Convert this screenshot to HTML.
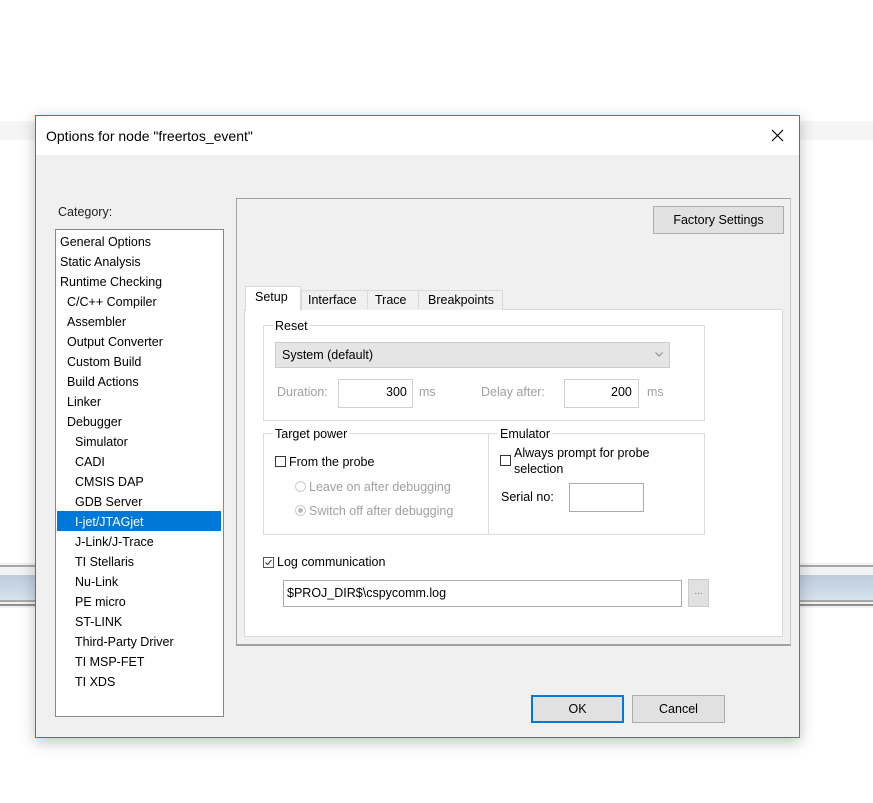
<!DOCTYPE html>
<html><head><style>
*{margin:0;padding:0;box-sizing:border-box}
body{width:873px;height:803px;background:#fff;position:relative;overflow:hidden;font-family:"Liberation Sans",sans-serif;font-size:12.5px;color:#000}
.a{position:absolute}
.t{position:absolute;white-space:nowrap;line-height:16px}
.g{color:#a0a0a0}
.btn{position:absolute;background:#e1e1e1;border:1px solid #adadad;text-align:center}
.inp{position:absolute;background:#fff;border:1px solid #d0d0d0}
.cb{position:absolute;width:11px;height:11px;border:1px solid #333;background:#fff}
.grp{position:absolute;border:1px solid #dcdcdc}
.gl{position:absolute;background:#fff;padding:0 2px;line-height:16px}
</style></head><body>
<div class="a" style="left:0;top:121px;width:873px;height:19px;background:#f5f5f5"></div>
<div class="a" style="left:0;top:563px;width:873px;height:45px;background:#f2f2f2"></div>
<div class="a" style="left:0;top:565px;width:873px;height:2px;background:#a8a8a8"></div>
<div class="a" style="left:0;top:575px;width:873px;height:25px;background:linear-gradient(#bccbdb,#d6e3ef)"></div>
<div class="a" style="left:0;top:600px;width:873px;height:2px;background:#a8a8a8"></div>
<div class="a" style="left:0;top:604px;width:873px;height:2px;background:#909090"></div>

<div class="a" style="left:35px;top:115px;width:765px;height:623px;background:#f0f0f0;border:1px solid #2b7bd0;box-shadow:0 4px 14px rgba(0,0,0,.25)">
 <div class="a" style="left:0;top:0;width:763px;height:39px;background:#fff"></div>
</div>
<div class="t" style="left:46px;top:127px;font-size:14px;line-height:18px">Options for node "freertos_event"</div>
<svg class="a" style="left:771px;top:129px" width="13" height="13"><path d="M1 1L12 12M12 1L1 12" stroke="#000" stroke-width="1.2"/></svg>

<div class="t" style="left:58px;top:204px;color:#222">Category:</div>
<div class="a" style="left:55px;top:229px;width:169px;height:488px;background:#fff;border:1px solid #828790"></div>
<div class="a" style="left:57px;top:511px;width:164px;height:20px;background:#0078d7"></div>
<div class="t" style="left:60px;top:234px">General Options</div>
<div class="t" style="left:60px;top:254px">Static Analysis</div>
<div class="t" style="left:60px;top:274px">Runtime Checking</div>
<div class="t" style="left:67px;top:294px">C/C++ Compiler</div>
<div class="t" style="left:67px;top:314px">Assembler</div>
<div class="t" style="left:67px;top:334px">Output Converter</div>
<div class="t" style="left:67px;top:354px">Custom Build</div>
<div class="t" style="left:67px;top:374px">Build Actions</div>
<div class="t" style="left:67px;top:394px">Linker</div>
<div class="t" style="left:67px;top:414px">Debugger</div>
<div class="t" style="left:75px;top:434px">Simulator</div>
<div class="t" style="left:75px;top:454px">CADI</div>
<div class="t" style="left:75px;top:474px">CMSIS DAP</div>
<div class="t" style="left:75px;top:494px">GDB Server</div>
<div class="t" style="left:75px;top:514px;color:#fff">I-jet/JTAGjet</div>
<div class="t" style="left:75px;top:534px">J-Link/J-Trace</div>
<div class="t" style="left:75px;top:554px">TI Stellaris</div>
<div class="t" style="left:75px;top:574px">Nu-Link</div>
<div class="t" style="left:75px;top:594px">PE micro</div>
<div class="t" style="left:75px;top:614px">ST-LINK</div>
<div class="t" style="left:75px;top:634px">Third-Party Driver</div>
<div class="t" style="left:75px;top:654px">TI MSP-FET</div>
<div class="t" style="left:75px;top:674px">TI XDS</div>

<div class="a" style="left:236px;top:198px;width:555px;height:448px;border:1px solid #a0a0a0;border-right-color:#c8c8c8;border-bottom:2px solid #a0a0a0"></div>
<div class="btn" style="left:653px;top:206px;width:131px;height:28px;line-height:26px">Factory Settings</div>

<div class="a" style="left:244px;top:309px;width:539px;height:328px;background:#fff;border:1px solid #d9d9d9"></div>
<div class="a" style="left:301px;top:290px;width:202px;height:20px;background:#f0f0f0;border:1px solid #d9d9d9;border-bottom:none"></div>
<div class="a" style="left:367px;top:290px;width:1px;height:19px;background:#d9d9d9"></div>
<div class="a" style="left:418px;top:290px;width:1px;height:19px;background:#d9d9d9"></div>
<div class="a" style="left:245px;top:286px;width:56px;height:25px;background:#fff;border:1px solid #d9d9d9;border-bottom:none"></div>
<div class="t" style="left:255px;top:289px">Setup</div>
<div class="t" style="left:308px;top:292px">Interface</div>
<div class="t" style="left:375px;top:292px">Trace</div>
<div class="t" style="left:428px;top:292px">Breakpoints</div>

<div class="grp" style="left:263px;top:325px;width:442px;height:96px"></div>
<div class="gl" style="left:273px;top:318px">Reset</div>
<div class="a" style="left:275px;top:342px;width:395px;height:26px;background:#e5e5e5;border:1px solid #cccccc"></div>
<div class="t" style="left:282px;top:347px">System (default)</div>
<svg class="a" style="left:655px;top:352px" width="8" height="5"><path d="M0.5 0.5L4 4L7.5 0.5" stroke="#888" fill="none"/></svg>
<div class="t g" style="left:277px;top:384px">Duration:</div>
<div class="inp" style="left:338px;top:379px;width:75px;height:29px"></div>
<div class="t" style="left:386px;top:384px">300</div>
<div class="t g" style="left:419px;top:384px">ms</div>
<div class="t g" style="left:481px;top:384px">Delay after:</div>
<div class="inp" style="left:564px;top:379px;width:75px;height:29px"></div>
<div class="t" style="left:611px;top:384px">200</div>
<div class="t g" style="left:647px;top:384px">ms</div>

<div class="grp" style="left:263px;top:433px;width:442px;height:102px"></div>
<div class="a" style="left:488px;top:433px;width:1px;height:102px;background:#dcdcdc"></div>
<div class="gl" style="left:273px;top:426px">Target power</div>
<div class="gl" style="left:498px;top:426px">Emulator</div>
<div class="cb" style="left:275px;top:456px"></div>
<div class="t" style="left:289px;top:454px">From the probe</div>
<div class="a" style="left:295px;top:481px;width:11px;height:11px;border:1px solid #ccc;border-radius:50%"></div>
<div class="t g" style="left:309px;top:479px">Leave on after debugging</div>
<div class="a" style="left:295px;top:505px;width:11px;height:11px;border:1px solid #ccc;border-radius:50%;background:radial-gradient(#b8b8b8 35%,#fff 40%)"></div>
<div class="t g" style="left:309px;top:503px">Switch off after debugging</div>
<div class="cb" style="left:500px;top:455px"></div>
<div class="t" style="left:514px;top:445px">Always prompt for probe</div>
<div class="t" style="left:514px;top:461px">selection</div>
<div class="t" style="left:501px;top:489px">Serial no:</div>
<div class="inp" style="left:569px;top:483px;width:75px;height:29px;border-color:#aaa"></div>

<div class="cb" style="left:263px;top:557px;border-color:#555"></div>
<svg class="a" style="left:264px;top:558px" width="9" height="9"><path d="M1.5 4.5L3.5 6.5L7.5 2" stroke="#333" fill="none"/></svg>
<div class="t" style="left:277px;top:554px">Log communication</div>
<div class="inp" style="left:283px;top:580px;width:399px;height:27px;border-color:#aaa"></div>
<div class="t" style="left:287px;top:585px">$PROJ_DIR$\cspycomm.log</div>
<div class="btn" style="left:688px;top:579px;width:21px;height:28px;border-color:#ccc;color:#777;line-height:24px;font-size:10px">...</div>

<div class="btn" style="left:531px;top:695px;width:93px;height:28px;border:2px solid #0078d7;line-height:24px">OK</div>
<div class="btn" style="left:632px;top:695px;width:93px;height:28px;line-height:26px">Cancel</div>
</body></html>
